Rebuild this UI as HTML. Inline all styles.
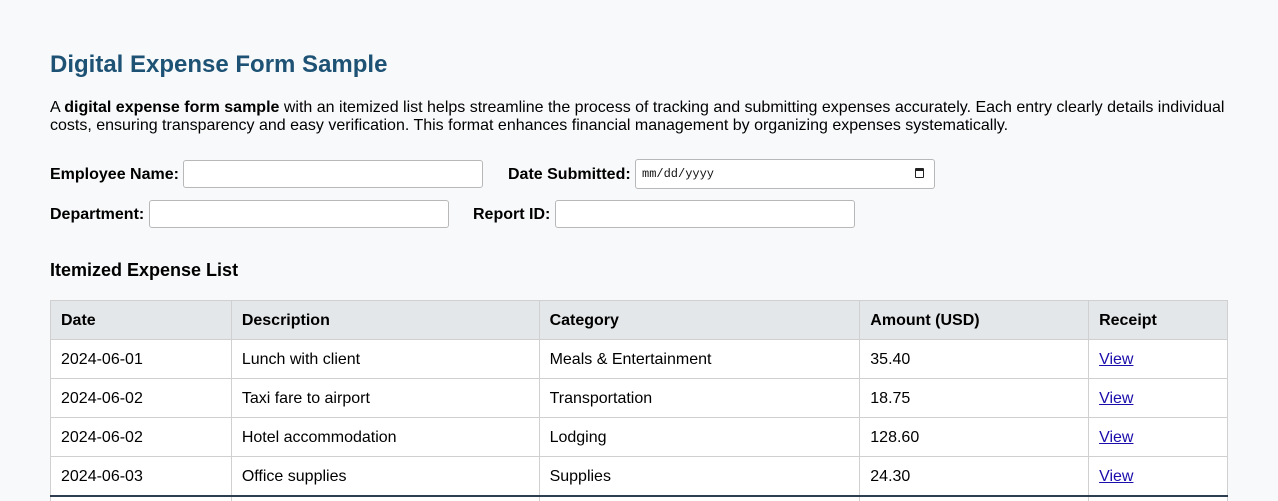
<!DOCTYPE html>
<html><head><style>
body{margin:0;background:#f8f9fa;font-family:"Liberation Sans",Arial,sans-serif;color:#000;}
.wrap{position:relative;width:1278px;height:501px;overflow:hidden;}
h1{position:absolute;left:50px;top:51px;margin:0;font-size:24px;color:#1d5275;font-weight:bold;}
p{position:absolute;left:50px;top:99px;margin:0;width:1190px;font-size:16px;line-height:18px;}
.lbl{position:absolute;font-weight:bold;font-size:16px;}
.in{position:absolute;height:28px;background:#fff;border:1px solid #b8b8b8;border-radius:3px;box-sizing:border-box;}
.date{font-family:"Liberation Mono",monospace;font-size:12px;color:#111;padding:7px 0 0 6px;}
h2{position:absolute;left:50px;top:260px;margin:0;font-size:18px;font-weight:bold;}
table{position:absolute;left:50px;top:300px;width:1178px;border-collapse:collapse;font-size:16px;background:#fff;}
td,th{border:1px solid #d0d0d0;height:39px;padding:2px 10px 0;text-align:left;box-sizing:border-box;}
th{background:#e4e7e9;font-weight:bold;}
tr.f td{border-top:2px solid #2d3e50;height:20px;}
a{color:#1a0dab;}
</style></head><body><div class="wrap">
<h1>Digital Expense Form Sample</h1>
<p>A <b>digital expense form sample</b> with an itemized list helps streamline the process of tracking and submitting expenses accurately. Each entry clearly details individual costs, ensuring transparency and easy verification. This format enhances financial management by organizing expenses systematically.</p>
<div class="lbl" style="left:50px;top:166px">Employee Name:</div>
<div class="in" style="left:183px;top:160px;width:300px"></div>
<div class="lbl" style="left:508px;top:166px">Date Submitted:</div>
<div class="in date" style="left:635px;top:159px;width:300px;height:30px">mm/dd/yyyy<span style="position:absolute;right:10px;top:8px;width:9px;height:10px;border:1.5px solid #222;border-top-width:3px;box-sizing:border-box;border-radius:1px"></span></div>
<div class="lbl" style="left:50px;top:206px">Department:</div>
<div class="in" style="left:149px;top:200px;width:300px"></div>
<div class="lbl" style="left:473px;top:206px">Report ID:</div>
<div class="in" style="left:555px;top:200px;width:300px"></div>
<h2>Itemized Expense List</h2>
<table>
<colgroup><col style="width:181px"><col style="width:308px"><col style="width:321px"><col style="width:229px"><col style="width:139px"></colgroup>
<tr><th>Date</th><th>Description</th><th>Category</th><th>Amount (USD)</th><th>Receipt</th></tr>
<tr><td>2024-06-01</td><td>Lunch with client</td><td>Meals &amp; Entertainment</td><td>35.40</td><td><a href="#">View</a></td></tr>
<tr><td>2024-06-02</td><td>Taxi fare to airport</td><td>Transportation</td><td>18.75</td><td><a href="#">View</a></td></tr>
<tr><td>2024-06-02</td><td>Hotel accommodation</td><td>Lodging</td><td>128.60</td><td><a href="#">View</a></td></tr>
<tr><td>2024-06-03</td><td>Office supplies</td><td>Supplies</td><td>24.30</td><td><a href="#">View</a></td></tr>
<tr class="f"><td></td><td></td><td></td><td></td><td></td></tr>
</table>
</div></body></html>
